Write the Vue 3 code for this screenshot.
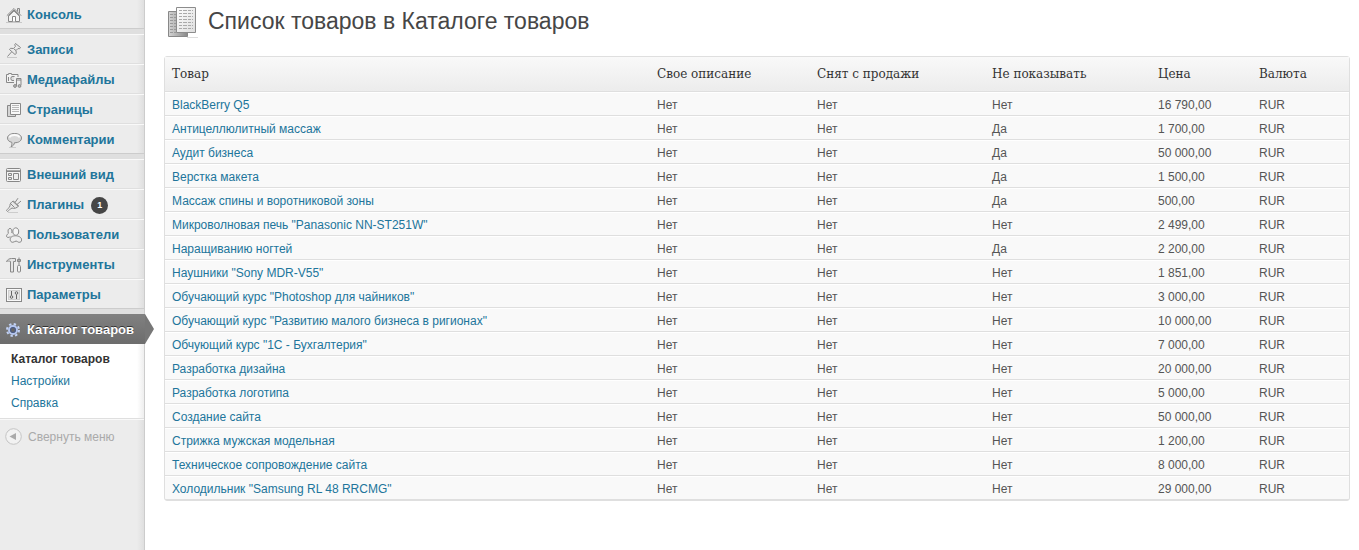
<script setup>
const groups = [
  [{ t: 'Консоль', i: 'home' }],
  [
    { t: 'Записи', i: 'pin' },
    { t: 'Медиафайлы', i: 'media' },
    { t: 'Страницы', i: 'pages' },
    { t: 'Комментарии', i: 'comment' },
  ],
  [
    { t: 'Внешний вид', i: 'theme' },
    { t: 'Плагины', i: 'plug', n: 1 },
    { t: 'Пользователи', i: 'users' },
    { t: 'Инструменты', i: 'tools' },
    { t: 'Параметры', i: 'params' },
  ],
]
const heads = ['Товар', 'Свое описание', 'Снят с продажи', 'Не показывать', 'Цена', 'Валюта']
const rows = [
  ['BlackBerry Q5', 'Нет', '16 790,00'],
  ['Антицеллюлитный массаж', 'Да', '1 700,00'],
  ['Аудит бизнеса', 'Да', '50 000,00'],
  ['Верстка макета', 'Да', '1 500,00'],
  ['Массаж спины и воротниковой зоны', 'Да', '500,00'],
  ['Микроволновая печь "Panasonic NN-ST251W"', 'Нет', '2 499,00'],
  ['Наращиванию ногтей', 'Да', '2 200,00'],
  ['Наушники "Sony MDR-V55"', 'Нет', '1 851,00'],
  ['Обучающий курс "Photoshop для чайников"', 'Нет', '3 000,00'],
  ['Обучающий курс "Развитию малого бизнеса в ригионах"', 'Нет', '10 000,00'],
  ['Обчующий курс "1С - Бухгалтерия"', 'Нет', '7 000,00'],
  ['Разработка дизайна', 'Нет', '20 000,00'],
  ['Разработка логотипа', 'Нет', '5 000,00'],
  ['Создание сайта', 'Нет', '50 000,00'],
  ['Стрижка мужская модельная', 'Нет', '1 200,00'],
  ['Техническое сопровождение сайта', 'Нет', '8 000,00'],
  ['Холодильник "Samsung RL 48 RRCMG"', 'Нет', '29 000,00'],
]
</script>

<template>
  <div class="page">
    <nav class="side">
      <ul v-for="(g, k) in groups" :key="k" class="group">
        <li v-for="m in g" :key="m.t">
          <a href="#" class="item">
            <svg class="ico" viewBox="0 0 16 16" aria-hidden="true">
              <g v-if="m.i === 'home'">
                <path d="M2.500 8.500v6h11v-6L8 3z" fill="#f4f4f4" />
                <path d="M11.500 4.500v-3h2v5" fill="#ddd" />
                <path d="M.8 8.700 8 1.500l7.200 7.200M2.800 9 8 3.900 13.200 9" />
                <path d="M6.500 14.500v-5h3v5" fill="#fff" />
                <path d="M0 15.500h16" stroke="#c8c8c8" />
              </g>
              <g v-else-if="m.i === 'pin'">
                <path d="M9.500 1.500l5 4-1 1.300-1.500-.3-2 2 .3 3-1.300 1L3.500 7.500l1-1.200 3 .2L9.500 4.300 8.700 2.800z" fill="#ebebeb" />
                <path d="M5.500 10 1.500 14.500M8 7l2 1.500" />
                <path d="M1 15.500h10" stroke="#c8c8c8" />
              </g>
              <g v-else-if="m.i === 'media'">
                <path d="M.5 2.500h2v-1h3v1h6.500v8H.500z" fill="#f2f2f2" />
                <path d="M2.500 5v4" />
                <circle cx="7" cy="6.500" r="2.200" fill="#ddd" />
                <path d="M9.500 14V6.500h6V13" fill="#eee" stroke="#eee" stroke-width="3" />
                <path d="M10.500 14V6.500h4.500V13M10.500 8h4.500" />
                <circle cx="9" cy="14" r="1.400" fill="#bbb" />
                <circle cx="13.500" cy="14" r="1.400" fill="#bbb" />
              </g>
              <g v-else-if="m.i === 'pages'">
                <path d="M1.500 3.500h8v11h-8z" fill="#d5d5d5" />
                <path d="M4.500 1.500h10v11h-10z" fill="#f8f8f8" />
                <path d="M6 3.500h7M6 5.500h7M6 7.500h7M6 9.500h7" stroke="#b8b8b8" />
              </g>
              <g v-else-if="m.i === 'comment'">
                <path d="M8.500 1.500c4 0 7 1.800 7 4.600s-3 4.800-7 4.600c-.4 2-1.500 3.500-3.500 4 .8-1.200 1-2.500.8-4.400C3 9.700 1.500 8.200 1.500 6.100c0-2.800 3-4.600 7-4.600z" fill="#d8d8d8" />
                <path d="M3.500 5.500c1-3.500 9-3.500 10 0" stroke="#fafafa" stroke-width="2" />
                <path d="M3 15.500h7" stroke="#ccc" />
              </g>
              <g v-else-if="m.i === 'theme'">
                <rect x=".5" y="1.500" width="14" height="13" rx="1" fill="#f5f5f5" />
                <path d="M1 3.500h13" stroke="#aaa" />
                <path d="M1 4.500h13" />
                <path d="M2.500 6.500h3v2h-3zM2.500 10.500h3v2h-3zM7.500 6.500h5v6h-5z" fill="#eee" />
              </g>
              <g v-else-if="m.i === 'plug'">
                <path d="M7.500 4l5 5c-1.500 2-4.500 3-6.500 2l-1.500 1c-1 .5-1.500 1.500-3 2.500l-1-1c1-1.500 2-2 2.500-3l1-1.500C3.500 7 5.500 4.500 7.500 4z" fill="#e8e8e8" />
                <path d="M9 5.500 12 1.200M11 7.500 15 4M7 4.500l5.500 5M5 7l3.500 3.500" />
                <path d="M2 15.500h10" stroke="#ccc" />
              </g>
              <g v-else-if="m.i === 'users'">
                <path d="M2.300 6C1.500 3 2.500 1.500 4 1.500S6.300 3 5.800 6M2.500 6.500C0 7.500 0 10.500 2 10.500c1 0 1.500-.7 2.500-.7" fill="#eee" />
                <path d="M7 6C6.200 3 7.800.8 9.800.8S13.300 3 12.500 6c-.7 3-4.800 3-5.500 0z" fill="#f6f6f6" />
                <path d="M4.200 12.800c-.3-2.800 2.300-4 5.300-4s6.200 1.500 6.200 4.200c0 1.500-1.200 2.300-2.500 2.300-1.600 0-1.700-1.200-3.200-1.200s-1.700 1.200-3.200 1.200-2.500-1-2.600-2.500z" fill="#eee" />
              </g>
              <g v-else-if="m.i === 'tools'">
                <path d="M.5 4.500c1-2 3-3 5-3h4v3h-2v10.500h-3V4.500c-1.500-.6-2.500-.6-4 0z" fill="#e5e5e5" />
                <path d="M13 .5v8M11.500 2.500h3v2h-3z" fill="#ccc" />
                <rect x="11.500" y="8.500" width="3" height="6.500" rx="1" fill="#f2f2f2" />
              </g>
              <g v-else>
                <rect x=".5" y="1.500" width="15" height="13" fill="#fafafa" />
                <rect x="2.500" y="3.500" width="11" height="9" fill="#e5e5e5" stroke="#d0d0d0" />
                <path d="M5.500 4v4.500M10.500 7.500V12" stroke="#666" />
                <circle cx="5.500" cy="10" r="1.300" stroke="#666" />
                <circle cx="10.500" cy="6" r="1.300" stroke="#666" />
              </g>
            </svg>
            <span>{{ m.t }}</span>
            <span v-if="m.n" class="badge">{{ m.n }}</span>
          </a>
        </li>
      </ul>
      <div class="current">
        <a href="#" class="item active">
          <svg class="ico" viewBox="0 0 16 16" aria-hidden="true">
            <circle cx="7" cy="8" r="6" stroke="#c3d3f5" stroke-width="2" stroke-dasharray="2.360 2.352" />
            <circle cx="7" cy="8" r="4" stroke="#b4c6f0" stroke-width="2" />
            <circle cx="7" cy="8" r="2.500" stroke="#445a92" fill="#666" />
          </svg>
          <span>Каталог товаров</span>
        </a>
        <svg class="arrow" viewBox="0 0 9 30" aria-hidden="true"><path d="M0 0 9 15 0 30z" /></svg>
      </div>
      <ul class="sub">
        <li><a href="#" class="here">Каталог товаров</a></li>
        <li><a href="#">Настройки</a></li>
        <li><a href="#">Справка</a></li>
      </ul>
      <button class="collapse" type="button">
        <svg viewBox="0 0 17 17" aria-hidden="true">
          <circle cx="8.500" cy="8.500" r="7.800" fill="#f2f2f2" stroke="#c4c4c4" />
          <path d="M11 5v7L4.500 8.500z" fill="#aaa" />
        </svg>
        <span>Свернуть меню</span>
      </button>
    </nav>
    <main>
      <header>
        <svg viewBox="0 0 32 32" aria-hidden="true">
          <defs>
            <linearGradient id="back" x2="1"><stop stop-color="#d5d5d5" /><stop offset="1" stop-color="#888" /></linearGradient>
            <linearGradient id="front" x2="1" y2="1"><stop stop-color="#fff" /><stop offset="1" stop-color="#ddd" /></linearGradient>
          </defs>
          <path d="M20 30.500h11" stroke="#ddd" />
          <path d="M1.500 4.500h19v25h-19z" fill="url(#back)" stroke="#888" />
          <path d="M3 7.500h6M3 10.500h6M3 13.500h6M3 16.500h6M3 19.500h6M3 22.500h6M3 25.500h6" stroke="#999" stroke-dasharray="3 1" />
          <path d="M9.500.5h19v25h-19z" fill="url(#front)" stroke="#8c8c8c" />
          <path d="M12 3.500h14M12 6.500h14M12 9.500h14M12 12.500h14M12 15.500h14M12 18.500h14M12 21.500h14" stroke="#aaa" stroke-dasharray="3 1 4 1" />
        </svg>
        <h1>Список товаров в Каталоге товаров</h1>
      </header>
      <table>
        <thead>
          <tr><th v-for="(h, k) in heads" :key="h" scope="col" :class="'c' + k">{{ h }}</th></tr>
        </thead>
        <tbody>
          <tr v-for="r in rows" :key="r[0]">
            <td><a href="#">{{ r[0] }}</a></td>
            <td>Нет</td>
            <td>Нет</td>
            <td>{{ r[1] }}</td>
            <td>{{ r[2] }}</td>
            <td>RUR</td>
          </tr>
        </tbody>
      </table>
    </main>
  </div>
</template>

<style>
body { margin: 0; background: #fff; }
</style>

<style scoped>
.page { display: flex; min-height: 100vh; font: 12px/18px "Liberation Sans", Arial, sans-serif; color: #555; }
* { box-sizing: border-box; }
a { color: #21759b; text-decoration: none; }
ul { list-style: none; margin: 0; padding: 0; }
.side { flex: none; width: 145px; border-right: 1px solid #ccc; background: linear-gradient(to right, transparent 137px, #dfdfdf 144px), #ececec; }
.group { border-bottom: 5px solid #dfdfdf; }
.item { display: flex; align-items: center; height: 30px; padding: 2px 0 0 6px; gap: 5px; font-weight: bold; font-size: 13px; white-space: nowrap; border-top: 1px solid #f9f9f9; border-bottom: 1px solid #dfdfdf; }
.group:first-child .item { height: 29px; border-top: 0; }
.group li:last-child .item { border-bottom-color: #ccc; }
.ico { flex: none; width: 16px; height: 16px; fill: none; stroke: #888; }
.badge { width: 17px; margin-left: 2px; border-radius: 9px; background: #464646; color: #fff; font-size: 9px; line-height: 17px; text-align: center; }
.current { position: relative; margin-right: -1px; }
.item.active { color: #fff; background: linear-gradient(#808080, #6d6d6d); border-color: #808080 transparent #6d6d6d; text-shadow: 0 -1px 0 #333; }
.arrow { position: absolute; left: 100%; top: 0; width: 9px; height: 30px; fill: #777; }
.sub { padding: 4px 0; background: linear-gradient(to right, transparent 137px, #eee 144px), #fff; border-bottom: 1px solid #dfdfdf; }
.sub a { display: block; padding-left: 11px; line-height: 22px; }
.sub .here { color: #333; font-weight: bold; }
.collapse { display: flex; align-items: center; gap: 6px; width: 100%; height: 34px; padding: 0 0 0 5px; border: 0; border-top: 1px solid #f9f9f9; background: none; color: #aaa; font: 12px/18px "Liberation Sans", Arial, sans-serif; }
.collapse svg { width: 17px; height: 17px; }
main { flex: 1; min-width: 0; padding: 7px 9px 0 19px; }
header { display: flex; gap: 9px; height: 49px; padding-left: 3px; }
header svg { width: 32px; height: 32px; fill: none; }
h1 { margin: 0; font-size: 23px; font-weight: normal; line-height: 29px; color: #464646; }
table { width: 100%; table-layout: fixed; border-spacing: 0; border: 1px solid #dfdfdf; border-radius: 3px; background: #f9f9f9; }
th { height: 35px; padding: 0 7px; text-align: left; font: 12px/20px "DejaVu Serif", serif; color: #333; background: linear-gradient(#f9f9f9, #ececec); border-bottom: 1px solid #dfdfdf; white-space: nowrap; }
td { height: 24px; padding: 2px 7px 0; border-top: 1px solid #fff; border-bottom: 1px solid #dfdfdf; white-space: nowrap; }
.c1 { width: 160px; }
.c2 { width: 175px; }
.c3 { width: 166px; }
.c4 { width: 101px; }
.c5 { width: 97px; }
</style>
